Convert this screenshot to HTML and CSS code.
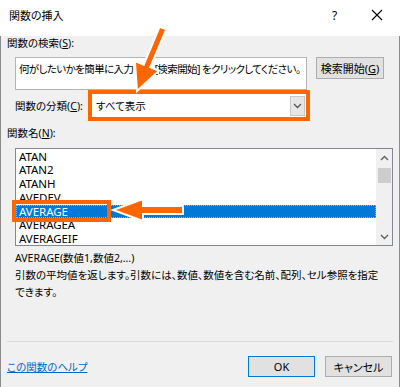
FILE: index.html
```html
<!DOCTYPE html>
<html lang="ja">
<head>
<meta charset="utf-8">
<title>関数の挿入</title>
<link rel="stylesheet" href="styles.css">
</head>
<body>
<div class="dialog">
  <div class="titlebar">
    <span class="title">関数の挿入</span>
    <span class="tb-help">?</span>
    <svg class="tb-close" width="12" height="12" viewBox="0 0 12 12"><path d="M1 1 L11 11 M11 1 L1 11" stroke="#000" stroke-width="1.1" fill="none"/></svg>
  </div>
  <div class="content">
    <div class="label">関数の検索(<u>S</u>):</div>
    <div class="search-row">
      <div class="search-box">何がしたいかを簡単に入力して、[検索開始] をクリックしてください。</div>
      <div class="btn btn-search">検索開始(<u>G</u>)</div>
    </div>
    <div class="cat-row">
      <div class="cat-label">関数の分類(<u>C</u>):</div>
      <div class="hl-box">
        <div class="select">
          <span class="select-text">すべて表示</span>
          <span class="select-btn"><svg width="9" height="6" viewBox="0 0 9 6"><polyline points="1,1 4.5,4.5 8,1" stroke="#555" stroke-width="1.3" fill="none"/></svg></span>
        </div>
      </div>
    </div>
    <div class="label label-name">関数名(<u>N</u>):</div>
    <div class="list">
      <div class="items">
        <div class="item">ATAN</div>
        <div class="item">ATAN2</div>
        <div class="item">ATANH</div>
        <div class="item">AVEDEV</div>
        <div class="item selected">AVERAGE</div>
        <div class="item">AVERAGEA</div>
        <div class="item">AVERAGEIF</div>
      </div>
      <div class="scrollbar">
        <svg class="sb-up" width="9" height="6" viewBox="0 0 9 6"><polyline points="1,5 4.5,1.5 8,5" stroke="#606060" stroke-width="1.4" fill="none"/></svg>
        <div class="sb-thumb"></div>
        <svg class="sb-down" width="9" height="6" viewBox="0 0 9 6"><polyline points="1,1 4.5,4.5 8,1" stroke="#606060" stroke-width="1.4" fill="none"/></svg>
      </div>
    </div>
    <div class="desc">
      <div>AVERAGE(数値1,数値2,...)</div>
      <div>引数の平均値を返します。引数には、数値、数値を含む名前、配列、セル参照を指定<br>できます。</div>
    </div>
    <div class="sep"></div>
    <div class="footer">
      <a class="help" href="#">この関数のヘルプ</a>
      <div class="btn btn-ok">OK</div>
      <div class="btn btn-cancel">キャンセル</div>
    </div>
  </div>
  <svg class="annot" width="400" height="387" viewBox="0 0 400 387">
    <polygon points="159.7,26.7 166.3,29.3 150.3,67.2 159.1,70.7 137,91 134.9,61.1 143.7,64.6" fill="#ff6600" stroke="#fff" stroke-width="2" stroke-linejoin="miter"/>
    <rect x="14" y="202" width="95" height="18" fill="none" stroke="#ff6600" stroke-width="4"/>
    <polygon points="183,206 143,206 143,199 113,210 143,221 143,214 183,214" fill="#ff6600" stroke="#fff" stroke-width="2" stroke-linejoin="miter"/>
  </svg>
</div>
</body>
</html>
```
FILE: styles.css
```css
html, body {
  margin: 0;
  padding: 0;
  background: #fff;
}
.dialog {
  position: relative;
  width: 400px;
  height: 387px;
  font-family: "Noto Sans", "Noto Sans CJK JP", sans-serif;
  font-size: 10.5px;
  color: #000;
  font-feature-settings: "palt";
}
.titlebar {
  height: 30px;
  background: #fff;
  display: flex;
  align-items: center;
  padding-left: 9px;
  box-sizing: border-box;
}
.title {
  font-size: 11px;
}
.tb-help {
  margin-left: auto;
  font-size: 12px;
  width: 10px;
}
.tb-close {
  margin-left: 29px;
  margin-right: 17px;
}
.content {
  height: 357px;
  box-sizing: border-box;
  background: #f0f0f0;
  border: 1px solid #8c8c8c;
  border-top: none;
  padding: 0 6px;
}
.label {
  margin-top: 6px;
  line-height: 14px;
  height: 14px;
}
.search-row {
  display: flex;
  margin-top: 7px;
  padding-left: 8px;
  align-items: flex-start;
}
.search-box {
  width: 292px;
  height: 33px;
  box-sizing: border-box;
  background: #fff;
  border: 1px solid #b4b4b4;
  padding: 4px 3px;
  line-height: 14px;
  white-space: nowrap;
  overflow: hidden;
  letter-spacing: -0.6px;
}
.btn {
  display: flex;
  align-items: center;
  justify-content: center;
  box-sizing: border-box;
  background: #e1e1e1;
  border: 1px solid #adadad;
  height: 21px;
}
.btn-search {
  margin-left: 9px;
  width: 68px;
  height: 22px;
  font-size: 11px;
}
.cat-row {
  display: flex;
  align-items: center;
  padding-left: 8px;
}
.cat-label {
  width: 73px;
}
.hl-box {
  width: 222px;
  height: 31px;
  box-sizing: border-box;
  border: 4px solid #ff6600;
}
.select {
  height: 100%;
  background: #fff;
  display: flex;
  align-items: center;
}
.select-text {
  padding-left: 4px;
  flex: 1;
}
.select-btn {
  width: 15px;
  height: 20px;
  margin-right: 1px;
  box-sizing: border-box;
  background: #e6e6e6;
  border: 1px solid #c8c8c8;
  display: flex;
  align-items: center;
  justify-content: center;
}
.label-name {
  margin-top: 5px;
}
.list {
  margin-top: 8px;
  margin-left: 8px;
  width: 378px;
  height: 98px;
  box-sizing: border-box;
  border: 1px solid #828790;
  background: #fff;
  display: flex;
  overflow: hidden;
}
.items {
  flex: 1;
  padding-top: 0.5px;
}
.item {
  height: 13.8px;
  line-height: 13.8px;
  padding-left: 3px;
  font-size: 11.5px;
  letter-spacing: -0.05px;
}
.item.selected {
  background: #0078d7;
  color: #fff;
  outline: 1px dotted #f0a060;
  outline-offset: -1px;
}
.scrollbar {
  width: 16px;
  background: #f0f0f0;
  display: flex;
  flex-direction: column;
  align-items: center;
}
.sb-up {
  margin-top: 6px;
}
.sb-thumb {
  margin-top: 7px;
  width: 13px;
  height: 15px;
  background: #cdcdcd;
}
.sb-down {
  margin-top: auto;
  margin-bottom: 5px;
}
.desc {
  margin-top: 4px;
  padding-left: 8px;
  line-height: 17px;
}
.sep {
  margin-top: 40px;
  height: 1px;
  background: #dcdcdc;
}
.footer {
  display: flex;
  align-items: center;
  margin-top: 14px;
}
.help {
  color: #0066cc;
  text-decoration: underline;
  margin-right: auto;
}
.btn-ok {
  width: 67px;
  border-color: #0078d7;
  font-size: 11px;
}
.btn-cancel {
  width: 67px;
  margin-left: 10px;
  margin-right: 1px;
  font-size: 11px;
}
.annot {
  position: absolute;
  left: 0;
  top: 0;
  pointer-events: none;
}
```
